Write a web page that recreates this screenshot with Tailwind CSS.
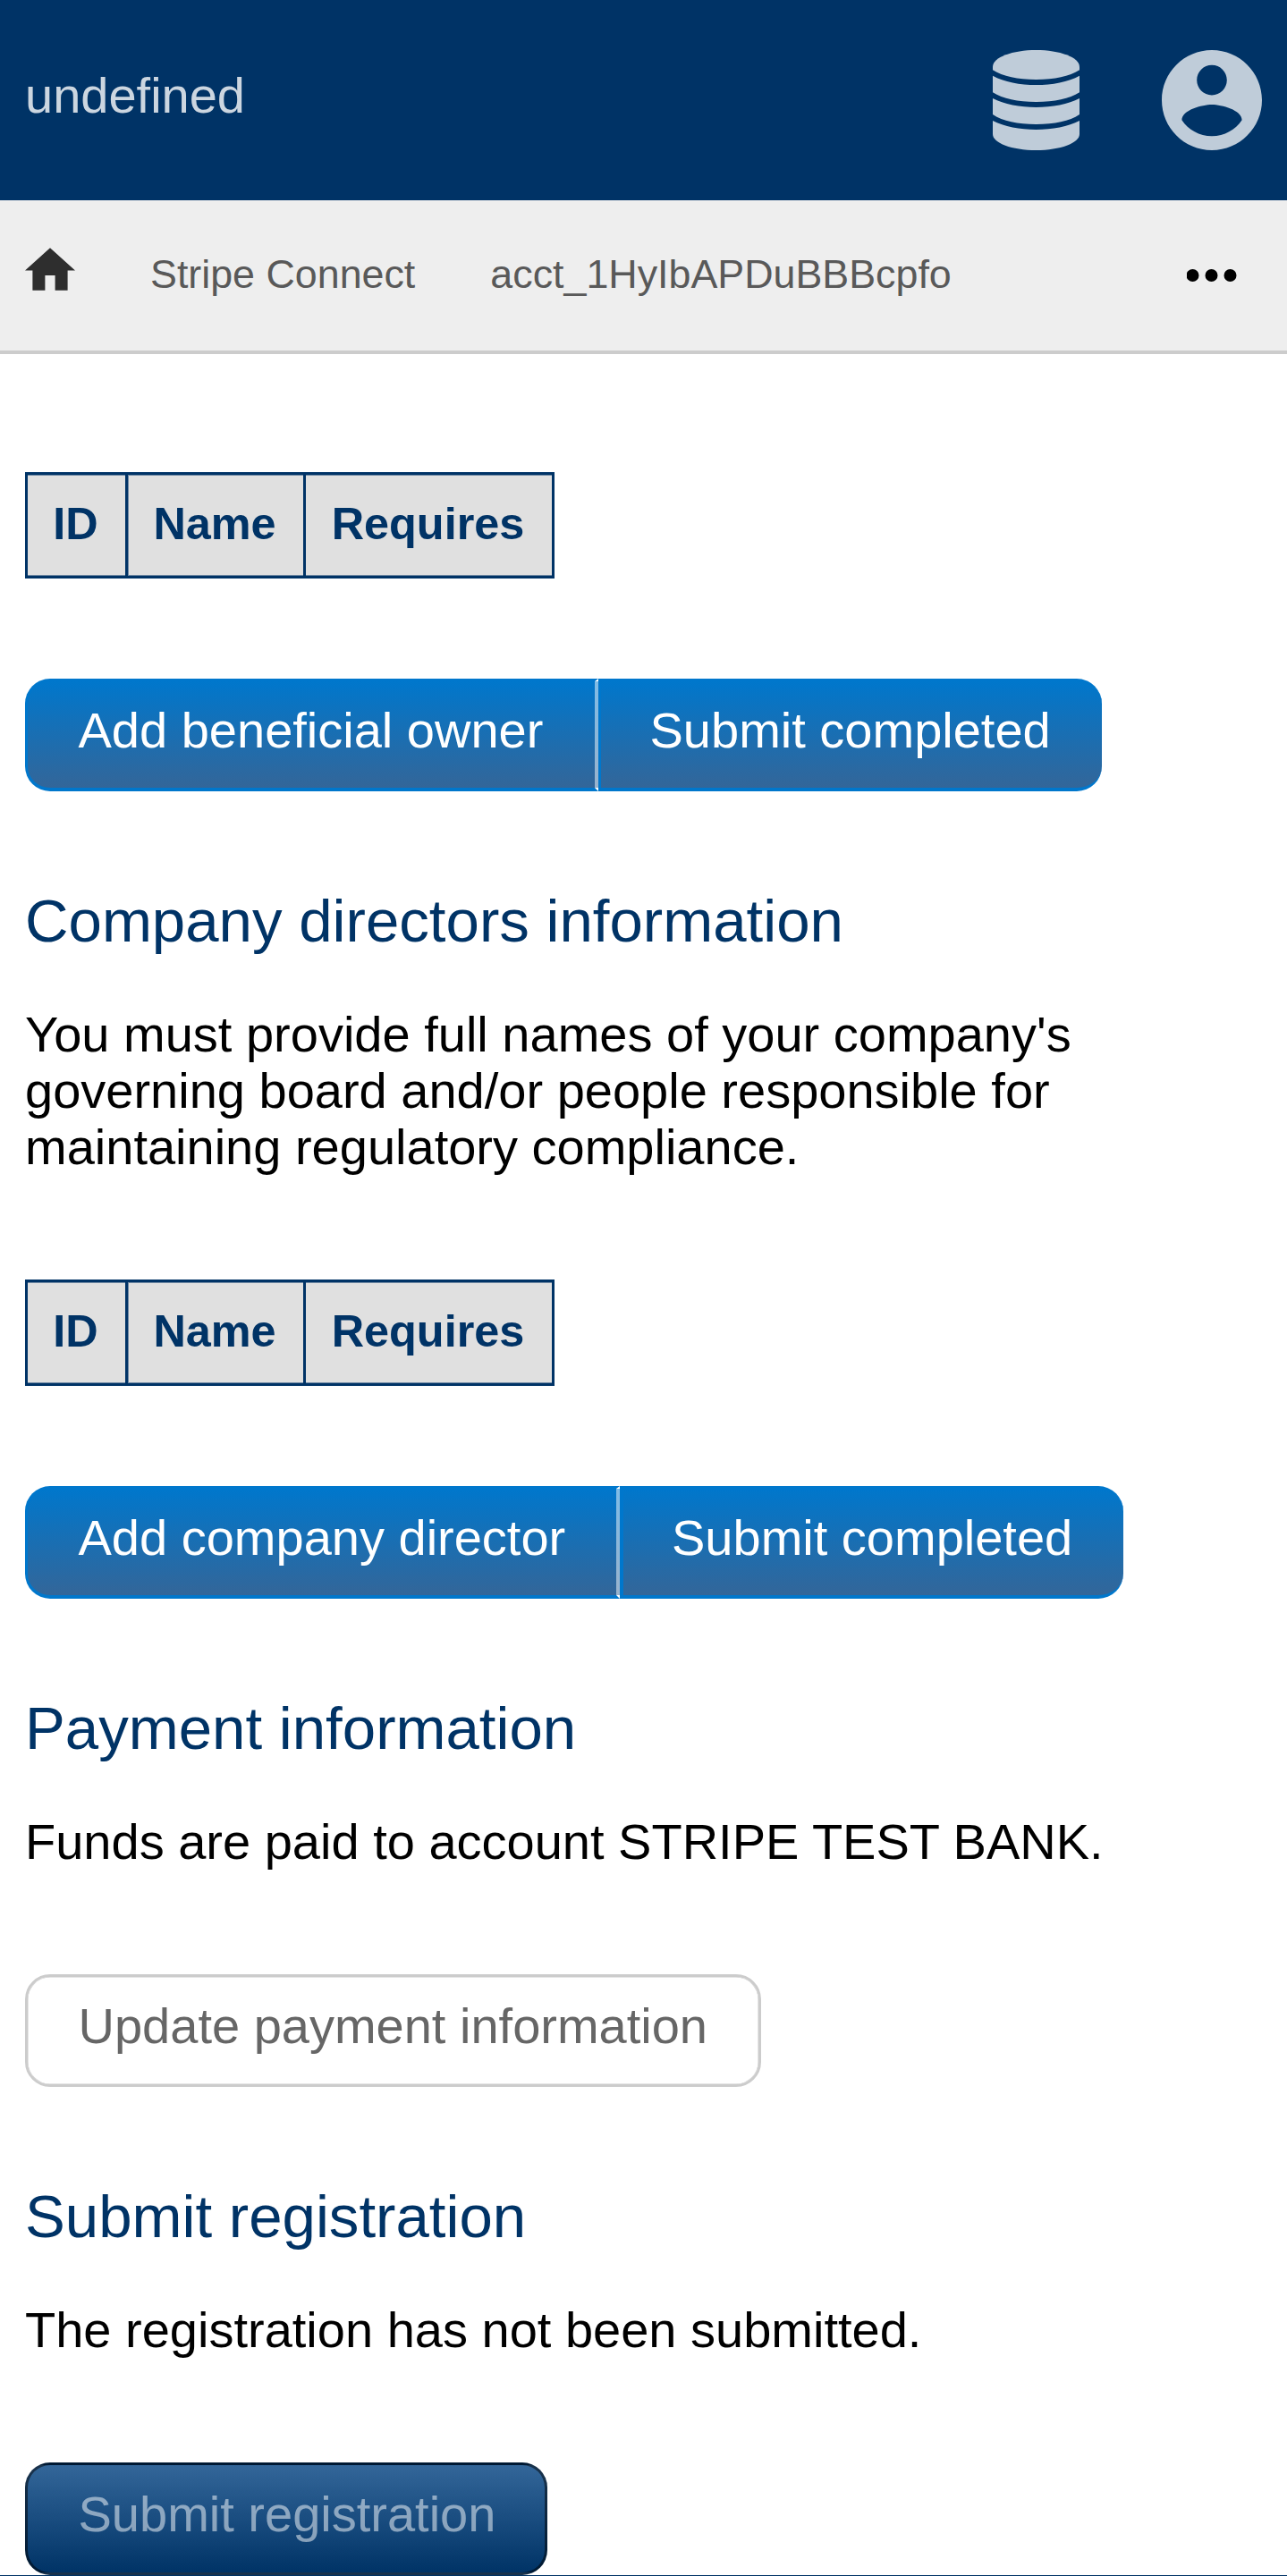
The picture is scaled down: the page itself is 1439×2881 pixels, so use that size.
<!DOCTYPE html>
<html lang="en">
<head>
<meta charset="utf-8">
<title>Stripe Connect</title>
<script src="https://cdn.jsdelivr.net/npm/@tailwindcss/browser@4"></script>
</head>
<body class="w-[1439px] h-[2881px] overflow-hidden flex flex-col bg-white text-black text-[56px] leading-[63px] font-['Liberation_Sans',Arial,sans-serif]">
  <header class="h-[224px] shrink-0 bg-[#003366] flex items-center justify-between pl-[28px] pr-[28px]">
    <a class="text-[#ccd6e0] pb-[11px]">undefined</a>
    <div class="flex items-center gap-[92px]">
      <svg class="w-[97px] h-[112px] fill-[#bfccd9]" viewBox="93 168 291 336" preserveAspectRatio="none">
        <path d="M93 224C93 192 160 168 238.500 168S384 192 384 224V235C350 257 300 267 238.500 267S127 257 93 235Z"/>
        <path d="M93 254C130 275 185 285 238.500 285S347 275 384 254V310C350 332 300 342 238.500 342S127 332 93 310Z"/>
        <path d="M93 330C130 350 185 360 238.500 360S347 350 384 330V384C350 407 300 417 238.500 417S127 407 93 384Z"/>
        <path d="M93 405C130 425 185 435 238.500 435S347 425 384 405V450C384 480 320 504 238.500 504S93 480 93 450Z"/>
      </svg>
      <svg class="size-[112px] fill-[#bfccd9]" viewBox="2 2 20 20"><path d="M12 2C6.480 2 2 6.480 2 12s4.480 10 10 10 10-4.480 10-10S17.520 2 12 2zm0 3c1.660 0 3 1.340 3 3s-1.340 3-3 3-3-1.340-3-3 1.340-3 3-3zm0 14.200c-2.500 0-4.710-1.280-6-3.220.03-1.990 4-3.080 6-3.080 1.990 0 5.970 1.090 6 3.080-1.290 1.940-3.500 3.220-6 3.220z"/></svg>
    </div>
  </header>

  <nav class="h-[172px] shrink-0 bg-[#eeeeee] border-b-3 border-[#cccccc] shadow-[inset_0_-1px_0_#cccccc] flex items-start pl-[28px] pr-[56px] text-[44.8px] leading-[50px] text-[#595959]">
    <svg class="mt-[53px] w-[56px] h-[48px] fill-[#2e2e2e]" viewBox="2 3 20 17"><path d="M10 20v-6h4v6h5v-8h3L12 3 2 12h3v8z"/></svg>
    <a class="mt-[57px] ml-[84px]">Stripe Connect</a>
    <a class="mt-[57px] ml-[84px]">acct_1HyIbAPDuBBBcpfo</a>
    <svg class="mt-[77px] ml-auto w-[56px] h-[14px] fill-black" viewBox="0 0 56 14"><circle cx="6.500" cy="7" r="7"/><circle cx="27.500" cy="7" r="7"/><circle cx="48.500" cy="7" r="7"/></svg>
  </nav>

  <main class="h-[2484px] shrink-0 pt-[132px] pl-[28px] flex flex-col items-start">
    <table class="w-[592px] h-[119px] table-fixed border-separate border-spacing-0 border-3 border-l-0 border-[#003366] bg-[#e0e0e0] text-[#003366] text-[50.4px] leading-[57px]">
      <tr>
        <th class="w-[112px] border-l-3 border-[#003366] pb-[5px] pr-[2px] font-bold text-center shadow-[inset_0_1px_0_#7089a3,inset_0_-1px_0_#7089a3]">ID</th>
        <th class="w-[199px] border-l-3 border-[#003366] pb-[5px] pr-[2px] font-bold text-center shadow-[inset_1px_1px_0_#7089a3,inset_0_-1px_0_#7089a3]">Name</th>
        <th class="border-l-3 border-[#003366] pb-[5px] pr-[2px] font-bold text-center shadow-[inset_0_1px_0_#7089a3,inset_0_-1px_0_#7089a3]">Requires</th>
      </tr>
    </table>

    <div class="mt-[112px] flex text-white">
      <button class="w-[641px] h-[126px] rounded-l-[28px] border-3 border-b-4 border-[#0077cc] border-r-4 border-r-white/50 bg-[linear-gradient(#0077cc,#336699)] pl-[56.5px] pb-[11px] text-left whitespace-nowrap">Add beneficial owner</button>
      <button class="w-[563px] h-[126px] rounded-r-[28px] border-3 border-b-4 border-r-0 border-[#0077cc] bg-[linear-gradient(#0077cc,#336699)] pl-[54.5px] pb-[11px] text-left whitespace-nowrap">Submit completed</button>
    </div>

    <h2 class="mt-[107px] text-[67.2px] leading-[75px] text-[#003366]">Company directors information</h2>
    <p class="mt-[58px] w-[1383px]">You must provide full names of your company's<br>governing board and/or people responsible for<br>maintaining regulatory compliance.</p>

    <table class="mt-[117px] w-[592px] h-[119px] table-fixed border-separate border-spacing-0 border-3 border-l-0 border-[#003366] bg-[#e0e0e0] text-[#003366] text-[50.4px] leading-[57px]">
      <tr>
        <th class="w-[112px] border-l-3 border-[#003366] pb-[5px] pr-[2px] font-bold text-center shadow-[inset_0_1px_0_#7089a3,inset_0_-1px_0_#7089a3]">ID</th>
        <th class="w-[199px] border-l-3 border-[#003366] pb-[5px] pr-[2px] font-bold text-center shadow-[inset_1px_1px_0_#7089a3,inset_0_-1px_0_#7089a3]">Name</th>
        <th class="border-l-3 border-[#003366] pb-[5px] pr-[2px] font-bold text-center shadow-[inset_0_1px_0_#7089a3,inset_0_-1px_0_#7089a3]">Requires</th>
      </tr>
    </table>

    <div class="mt-[112px] flex text-white">
      <button class="w-[665px] h-[126px] rounded-l-[28px] border-3 border-b-4 border-[#0077cc] border-r-4 border-r-white/50 bg-[linear-gradient(#0077cc,#336699)] pl-[56.5px] pb-[11px] text-left whitespace-nowrap">Add company director</button>
      <button class="w-[563px] h-[126px] rounded-r-[28px] border-3 border-b-4 border-r-0 border-l-4 border-[#0077cc] bg-[linear-gradient(#0077cc,#336699)] pl-[54px] pb-[11px] text-left whitespace-nowrap">Submit completed</button>
    </div>

    <h2 class="mt-[107px] text-[67.2px] leading-[75px] text-[#003366]">Payment information</h2>
    <p class="mt-[58px]">Funds are paid to account STRIPE TEST BANK.</p>
    <button class="mt-[117px] w-[822.7px] h-[126px] shrink-0 rounded-[28px] border-3 border-[#cccccc] shadow-[inset_0_0_0_0.5px_#cccccc] pl-[56.5px] pb-[11px] text-left whitespace-nowrap text-[#666666]">Update payment information</button>

    <h2 class="mt-[107px] text-[67.2px] leading-[75px] text-[#003366]">Submit registration</h2>
    <p class="mt-[58px]">The registration has not been submitted.</p>
    <button class="mt-[117px] w-[584px] h-[126px] shrink-0 rounded-[28px] border-3 border-black/50 bg-[linear-gradient(#336699,#003366)] pl-[56.5px] pb-[11px] text-left whitespace-nowrap text-white/50">Submit registration</button>
  </main>
  <footer class="h-px shrink-0 bg-[#003366]"></footer>
</body>
</html>
